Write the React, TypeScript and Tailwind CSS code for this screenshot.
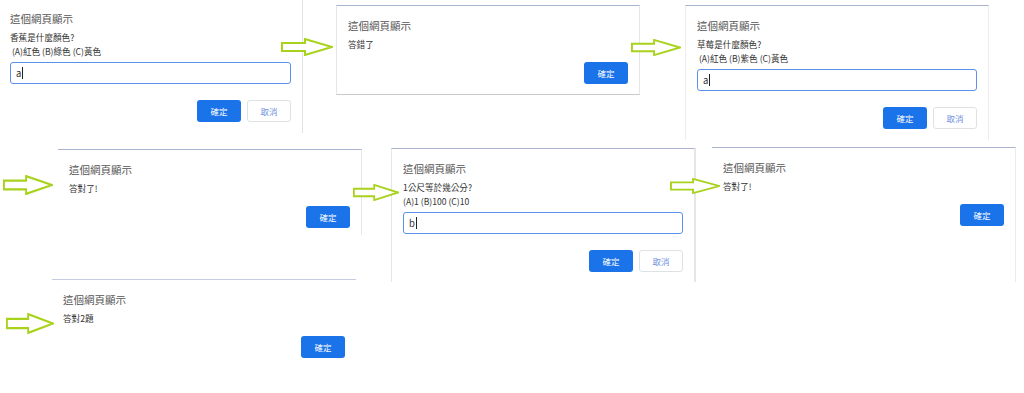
import React from "react";

type DialogProps = {
  x: number;
  y: number;
  h: number;
  lines: string[];
  value?: string;
  borders?: string;
};

const FONT = '"Noto Sans CJK TC", "Noto Sans", "Liberation Sans", sans-serif';

// hollow yellow-green arrow between screenshots
const Arrow = ({ x, y, w, h }: { x: number; y: number; w: number; h: number }) => (
  <svg
    className="absolute"
    style={{ left: x, top: y }}
    width={w}
    height={h}
    viewBox="0 0 52 18"
    preserveAspectRatio="none"
  >
    <polygon
      points="1,5 24,5 24,1 51,9 24,17 24,13 1,13"
      fill="#ffffff"
      stroke="#a9d21c"
      strokeWidth="2"
      strokeLinejoin="miter"
    />
  </svg>
);

const Dialog = ({ x, y, h, lines, value, borders }: DialogProps) => {
  const isPrompt = value !== undefined;
  return (
    <div
      className={`absolute w-[304px] bg-white px-[11px] pt-[13px] ${borders ?? "border-t border-r border-t-[#b3bbd3] border-r-[#e6e6e6]"}`}
      style={{ left: x, top: y, height: h }}
    >
      <div className="text-[10.5px] leading-[14px] text-[#555]">這個網頁顯示</div>
      <div className="mt-[4px] text-[8.6px] leading-[14px] text-[#333]">
        {lines.map((l) => (
          <div key={l} className="whitespace-pre">
            {l}
          </div>
        ))}
      </div>
      {isPrompt && (
        <div className="mt-[4px] flex h-[22px] items-center rounded-[3px] border-[1.5px] border-[#5b91ec] pl-[5px] text-[9.5px] text-[#333]">
          <span>{value}</span>
          <span className="ml-[1px] h-[12px] w-px bg-[#222]" />
        </div>
      )}
      <div className={`flex justify-end gap-[6px] ${isPrompt ? "mt-[16px]" : "mt-[11px]"}`}>
        <button className="h-[22px] w-[44px] rounded-[3px] bg-[#1a73e8] text-[8.5px] text-white">確定</button>
        {isPrompt && (
          <button className="h-[22px] w-[44px] rounded-[3px] border border-[#dfe1e5] bg-white text-[8.5px] text-[#6f8fe0]">
            取消
          </button>
        )}
      </div>
    </div>
  );
};

export default function App() {
  return (
    <div className="relative h-[393px] w-[1024px] overflow-hidden bg-white" style={{ fontFamily: FONT }}>
      <Dialog
        x={-1}
        y={-1}
        h={134}
        lines={["香蕉是什麼顏色?", " (A)紅色 (B)綠色 (C)黃色"]}
        value="a"
        borders="border-r border-r-[#e3e3e3]"
      />
      <Dialog
        x={336}
        y={5}
        h={90}
        lines={["答錯了"]}
        borders="border border-t-[#a9b3d0] border-x-[#e6e6e6] border-b-[#c9c9c9]"
      />
      <Dialog
        x={685}
        y={5}
        h={135}
        lines={["草莓是什麼顏色?", " (A)紅色 (B)紫色 (C)黃色"]}
        value="a"
        borders="border-t border-x border-t-[#a9b3d0] border-x-[#ececec]"
      />
      <Dialog
        x={58}
        y={149}
        h={86}
        lines={["答對了!"]}
        borders="border-t border-r border-t-[#a9b3d0] border-r-[#e8e8e8]"
      />
      <Dialog
        x={391}
        y={148}
        h={134}
        lines={["1公尺等於幾公分?", "(A)1 (B)100 (C)10"]}
        value="b"
        borders="border-t border-x border-t-[#a9b3d0] border-x-[#e6e6e6]"
      />
      <Dialog
        x={712}
        y={147}
        h={135}
        lines={["答對了!"]}
        borders="border-t border-r border-t-[#a9b3d0] border-r-[#ececec]"
      />
      <div className="absolute left-[695px] top-[148px] h-[134px] w-px bg-[#e6e6e6]" />
      <Dialog
        x={52}
        y={279}
        h={88}
        lines={["答對2題"]}
        borders="border-t border-t-[#c6cbe0]"
      />

      <Arrow x={281} y={38} w={52} h={18} />
      <Arrow x={631} y={39} w={50} h={17} />
      <Arrow x={3} y={175} w={50} h={20} />
      <Arrow x={353} y={184} w={46} h={17} />
      <Arrow x={670} y={178} w={50} h={16} />
      <Arrow x={6} y={313} w={48} h={21} />
    </div>
  );
}
